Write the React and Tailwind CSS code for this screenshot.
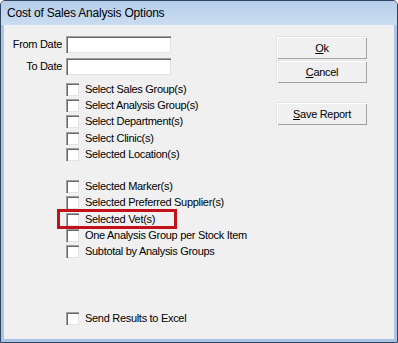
import React from "react";

const font = { fontFamily: '"Liberation Sans", Arial, sans-serif' };

function CheckBox() {
  return (
    <div className="w-[13px] h-[13px] shrink-0 bg-white border-t border-l border-[#a0a0a0] border-b-white border-r-white shadow-[inset_1px_1px_0_#696969,inset_-1px_-1px_0_#e3e3e3]" />
  );
}

function CheckRow({ label }) {
  return (
    <div className="h-[16.2px] flex items-start">
      <div className="flex items-center">
        <CheckBox />
        <span className="ml-[6px] text-[11px] leading-[13px] tracking-[-0.3px] text-black whitespace-nowrap">
          {label}
        </span>
      </div>
    </div>
  );
}

function Input() {
  return (
    <div className="w-[105px] h-[17px] bg-white border-t border-l border-[#a0a0a0] border-b-white border-r-white shadow-[inset_1px_1px_0_#696969,inset_-1px_-1px_0_#e3e3e3]" />
  );
}

function Button({ first, rest }) {
  return (
    <div className="w-[91px] h-[23px] flex items-center justify-center bg-[#f0f0f0] border-t border-l border-[#e3e3e3] border-b-[#696969] border-r-[#696969] shadow-[inset_1px_1px_0_#ffffff,inset_-1px_-1px_0_#a0a0a0] text-[11px] tracking-[-0.3px] text-black">
      <span>
        <span className="underline underline-offset-[1px]">{first}</span>
        {rest}
      </span>
    </div>
  );
}

export default function App() {
  return (
    <div style={font} className="w-[398px] h-[343px] bg-white">
      <div className="w-[398px] h-[343px] flex flex-col border border-[#2f4560] rounded-t-[5px] bg-[#a9c6e6] overflow-hidden">
        <div className="h-[24px] shrink-0 flex items-center pl-[6px] bg-gradient-to-b from-[#b7cfea] to-[#c9dcf1]">
          <span className="text-[12px] tracking-[-0.2px] text-black">Cost of Sales Analysis Options</span>
        </div>
        <div className="flex-1 mx-[3px] mb-[3px] bg-[#f0f0f0] relative flex">
          <div className="w-[268px] flex flex-col pt-[11px]">
            <div className="flex items-center h-[17px]">
              <span className="w-[58px] text-right text-[11px] tracking-[-0.3px] text-black">From Date</span>
              <div className="ml-[4px]"><Input /></div>
            </div>
            <div className="flex items-center h-[17px] mt-[5px]">
              <span className="w-[58px] text-right text-[11px] tracking-[-0.3px] text-black">To Date</span>
              <div className="ml-[4px]"><Input /></div>
            </div>
            <div className="flex flex-col pl-[62px] mt-[8px]">
              <CheckRow label="Select Sales Group(s)" />
              <CheckRow label="Select Analysis Group(s)" />
              <CheckRow label="Select Department(s)" />
              <CheckRow label="Select Clinic(s)" />
              <CheckRow label="Selected Location(s)" />
              <div className="h-[16.2px]" />
              <CheckRow label="Selected Marker(s)" />
              <CheckRow label="Selected Preferred Supplier(s)" />
              <CheckRow label="Selected Vet(s)" />
              <CheckRow label="One Analysis Group per Stock Item" />
              <CheckRow label="Subtotal by Analysis Groups" />
              <div className="mt-[51px]">
                <CheckRow label="Send Results to Excel" />
              </div>
            </div>
          </div>
          <div className="flex flex-col pt-[11px] pl-[4px]">
            <Button first="O" rest="k" />
            <div className="mt-[1px]"><Button first="C" rest="ancel" /></div>
            <div className="mt-[19px]"><Button first="S" rest="ave Report" /></div>
          </div>
          <div className="absolute left-[53px] top-[184px] w-[120px] h-[20px] border-[3px] border-[#c4101a]" />
        </div>
      </div>
    </div>
  );
}
